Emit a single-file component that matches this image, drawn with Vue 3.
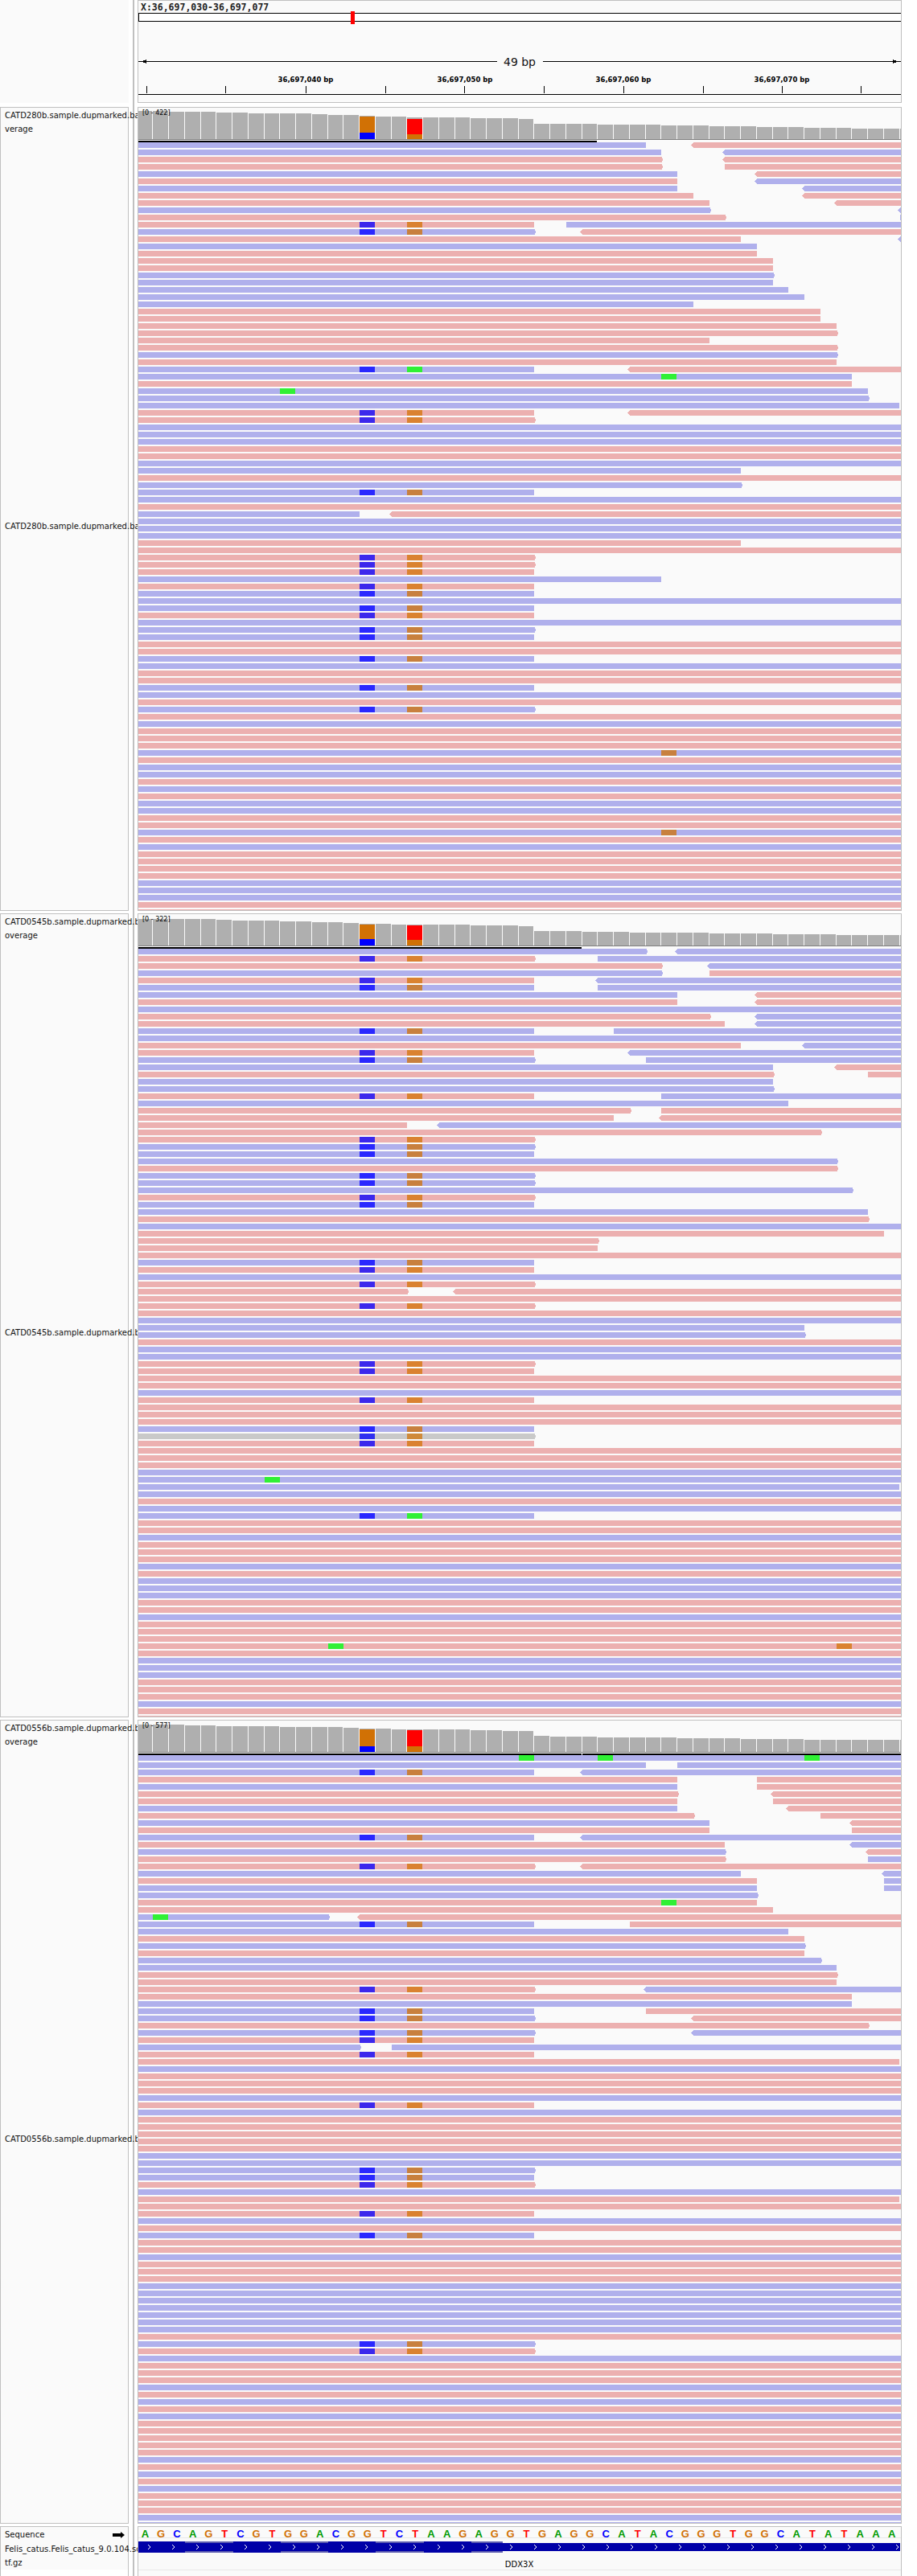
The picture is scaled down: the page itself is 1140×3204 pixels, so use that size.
<script setup>
const bw = 19.75
const bx = (n) => bw * n - 1.5
const W = 948

const MM_COLORS = {
  p: { b: '#3c28ec', o: '#da8230', g: '#30f035' },
  b: { b: '#2a28ff', o: '#c8803e', g: '#30f035' },
  g: { b: '#3030f0', o: '#cf8a3a', g: '#30f035' }
}
const FILL = { p: '#ecb0b0', b: '#b0b0ec', g: '#c9c9c9' }

function parseRead(token) {
  const [head, ...mm] = token.split(':')
  let h = head
  if (h === 'P') h = 'p0'
  if (h === 'B') h = 'b0'
  let extra = []
  if (/^[pbg]m>?$/.test(h)) {
    extra = ['b14', 'o17']
    h = h[0] + '0-25' + (h.endsWith('>') ? '>' : '')
  }
  const m = h.match(/^([pbg])(<)?([\d.]+)(?:-([\d.]+))?(>)?$/)
  return {
    c: m[1],
    la: !!m[2],
    s: +m[3],
    e: m[4] ? +m[4] : null,
    ra: !!m[5],
    mm: [...extra, ...mm]
  }
}

function buildRows(text, y0) {
  const shapes = []
  const mms = []
  text.trim().split(/\s+/).forEach((row, k) => {
    const y = y0 + 9 * k
    row.split(',').forEach((tok) => {
      const r = parseRead(tok)
      const x0 = r.s === 0 ? 0 : Math.round(bx(r.s))
      const x1 = r.e === null ? W : Math.round(bx(r.e))
      const fill = FILL[r.c]
      if (r.la || r.ra) {
        const pts = [[x0, y], [x1, y]]
        if (r.ra) pts.push([x1 + 1, y + 1], [x1 + 2.5, y + 3.5], [x1 + 1, y + 6])
        pts.push([x1, y + 7], [x0, y + 7])
        if (r.la) pts.push([x0 - 1, y + 6], [x0 - 3, y + 3.5], [x0 - 1, y + 1])
        shapes.push({ points: pts.map((p) => p.join(',')).join(' '), fill })
      } else {
        shapes.push({ x: x0, y, w: x1 - x0, fill })
      }
      r.mm.forEach((t) => {
        const n = +t.slice(1)
        mms.push({ x: Math.round(bx(n)), y, fill: MM_COLORS[r.c][t[0]] })
      })
    })
  })
  return { shapes, mms }
}

function buildBars(tops, base, m14, m17) {
  const bars = []
  for (let n = 0; n < 49; n++) {
    const left = Math.round(bx(n))
    const right = Math.min(Math.round(bx(n + 1)) - 1, W)
    const t = (n < 48 ? tops[n] : tops[47]) - base
    bars.push({ x: left, y: t, w: right - left, h: 39 - t, fill: '#afafaf' })
    if (n === 14) {
      bars.push({ x: left, y: m14[0] - base, w: right - left, h: m14[1] - m14[0], fill: '#d17105' })
      bars.push({ x: left, y: m14[1] - base, w: right - left, h: base + 39 - m14[1], fill: '#0000ff' })
    }
    if (n === 17) {
      bars.push({ x: left, y: m17[0] - base, w: right - left, h: m17[1] - m17[0], fill: '#ff0000' })
      bars.push({ x: left, y: m17[1] - base, w: right - left, h: base + 39 - m17[1], fill: '#d17105' })
    }
  }
  return bars
}

const T1 = `b0-32,p<35 b0-33,b<37 p0-33>,p<37 p0-33>,p37 b0-34,p<39 p0-34,b<39 b0-34,b<42 p0-35,p<42 p0-36,p<44
b0-36>,b<48 p0-37>,b48 pm,b27 bm>,p<28 p0-38,b<48 b0-39 p0-39 p0-40 p0-40 b0-40> b0-40 b0-41 b0-42 b0-35 p0-43 p0-43
p0-44 p0-44> p0-36 p0-44> b0-44> p0-44 b0-25:b14:g17,p<31 b0-45:g33 p0-45 b0-46:g9 b0-46> b0-47.95 pm,p<31 pm> B B B P P B
b0-38 P b0-38> bm B P b0-14,p<16 B B B p0-38 P pm> pm> pm b0-33 pm bm B bm pm B bm> bm P P bm B P P bm B P bm> P B P P P
B:o33 P B B P B P B B P P B:o33 P B P P P P B B B P P`

const T2 = `b0-32>,b<34 pm>,b29 p0-33>,b<36 b0-33>,p36 pm,b<29 bm,b29 b0-34,p<39 p0-34,p<39 B p0-36>,b<39 p0-37,b<39 bm,b30 B
p0-38,b<42 pm,b<31 bm>,b32 b0-40,p<44 p0-40>,p46 b0-40 b0-40> pm,b33 b0-41 p0-31>,p33 p0-30,p<33 p0-17,b<19 p0-43> pm> bm> bm
b0-44> p0-44> bm> bm> b0-45> pm> bm b0-46 p0-46> B p0-47 p0-29> p0-29 P bm pm B pm> p0-17>,p<20 P pm> P B b0-42 b0-42> P B B
pm> pm P P B pm P P P bm gm> pm P P P B B:g8 b0-47.95 B P B b0-25:b14:g17 P P B P P P B P B B B P P B P P P P:g12:o44 P B B B
P P P B P P`

const T3 = `B:g24:g29:g42 b0-32,b34 bm,b<28 p0-34,p39 b0-34,p39 p0-34>,p<40 p0-34,p40 b0-34,p<41 p0-35>,p43 b0-36,p<45 p0-36,p45 bm,b<28
p0-37,b<45 b0-37>,p<46 p0-37>,b46 pm>,p<28 b0-38,b<47 p0-39,b47 b0-39,b47 b0-39> p0-39:g33 p0-40 b0-12>:g1,p<14 bm,p31 b0-41
p0-42 b0-42> p0-42 b0-43> b0-44 p0-44> p0-44 pm>,b<32 p0-45 b0-45 bm,p32 bm>,p<35 p0-46> bm>,b<35 pm b0-14>,b16 pm p0-47.95 B P P
P B pm B P P P P P B B bm> bm pm> B p0-47.95 P pm B P bm P P B P P P B B B B B B B P bm> pm> B P P P B P B P B P P P P P B P B P B
P P P B B`

const seqText = 'AGCAGTCGTGGACGGTCTAAGAGGTGAGGCATACGGGTGGCATATAAA'
const seqColor = { A: '#009a00', C: '#0000ff', G: '#d17105', T: '#ff0000' }
const letters = seqText.split('').map((ch, i) => ({ ch, x: bx(i) + bw / 2, fill: seqColor[ch] }))

const tracks = [
  {
    name: 'CATD280b.sample.dupmarked.bam',
    second: 'verage',
    range: '[0 - 422]',
    barEnd: 570,
    gaps: [],
    bars: buildBars(
      [138,138,139,139,139,140,140,141,141,141,141,142,143,143,144,145,145,146,146,146,146,147,147,147,148,154,154,154,154,155,155,155,155,156,156,156,157,157,157,158,158,158,159,159,159,160,160,160],
      134, [145, 165], [148, 167]
    ),
    ...buildRows(T1, 43)
  },
  {
    name: 'CATD0545b.sample.dupmarked.bam',
    second: 'overage',
    range: '[0 - 322]',
    barEnd: 551,
    gaps: [],
    bars: buildBars(
      [1143,1143,1143,1143,1143,1144,1145,1145,1145,1146,1146,1147,1147,1148,1149,1149,1150,1150,1150,1150,1150,1151,1151,1151,1152,1158,1158,1158,1159,1159,1159,1160,1160,1160,1160,1160,1161,1161,1161,1161,1162,1162,1162,1162,1163,1163,1163,1163],
      1137, [1150, 1168], [1151, 1169]
    ),
    ...buildRows(T2, 43)
  },
  {
    name: 'CATD0556b.sample.dupmarked.bam',
    second: 'overage',
    range: '[0 - 577]',
    barEnd: W,
    gaps: [551],
    bars: buildBars(
      [2145,2145,2145,2146,2146,2147,2147,2147,2147,2148,2148,2148,2148,2149,2150,2150,2151,2151,2151,2151,2151,2152,2152,2153,2153,2159,2160,2160,2160,2161,2161,2161,2161,2161,2162,2162,2162,2162,2163,2163,2163,2163,2164,2164,2164,2164,2164,2164],
      2140, [2151, 2172], [2152, 2172]
    ),
    ...buildRows(T3, 43)
  }
]

const ticks = [9.5, 108, 207.5, 306.5, 404.5, 503.5, 602.5, 701.5, 799.5, 898]
const tickLabels = [
  { x: 208, t: '36,697,040 bp' },
  { x: 406, t: '36,697,050 bp' },
  { x: 603, t: '36,697,060 bp' },
  { x: 800, t: '36,697,070 bp' }
]

const lightStrips = [[58, 60], [177, 59], [295, 60], [414, 39]]
const chevrons = Array.from({ length: 32 }, (_, i) => 13 + i * 30)
</script>

<template>
  <div class="app">
    <section class="row header">
      <div class="name blank"></div>
      <div class="data">
        <svg class="canvas" width="948" height="126">
          <text class="locus" x="3" y="12">X:36,697,030-36,697,077</text>
          <rect x="0" y="15" width="948" height="11" fill="#fff" />
          <rect x="0" y="15" width="948" height="1" fill="#000" />
          <rect x="0" y="25" width="948" height="1" fill="#000" />
          <rect x="0" y="15" width="1" height="11" fill="#000" />
          <rect x="264" y="13" width="5" height="16" fill="#ff0000" />
          <rect x="0" y="75" width="446" height="1" fill="#000" />
          <rect x="503" y="75" width="445" height="1" fill="#000" />
          <polygon points="3,75.5 10,73 10,78" fill="#000" />
          <polygon points="945,75.5 938,73 938,78" fill="#000" />
          <text class="span" x="474" y="81" text-anchor="middle">49 bp</text>
          <text v-for="l in tickLabels" :key="l.t" class="tick" :x="l.x" y="101" text-anchor="middle">{{ l.t }}</text>
          <rect v-for="t in ticks" :key="t" :x="Math.round(t)" y="106" width="1" height="9" fill="#000" />
          <rect x="0" y="116" width="948" height="1" fill="#000" />
        </svg>
      </div>
    </section>

    <section v-for="t in tracks" :key="t.name" class="row track">
      <div class="name">
        <div class="label clip">{{ t.name }}</div>
        <div class="label">{{ t.second }}</div>
        <div class="label clip mid">{{ t.name }}</div>
      </div>
      <div class="data">
        <svg class="canvas" width="948" height="998">
          <rect
            v-for="(b, i) in t.bars"
            :key="'c' + i"
            :x="b.x"
            :y="b.y"
            :width="b.w"
            :height="b.h"
            :fill="b.fill"
          />
          <rect x="0" y="39" width="948" height="1" fill="#808080" />
          <rect x="0" y="41" :width="t.barEnd" height="2" fill="#000" />
          <rect v-for="g in t.gaps" :key="g" :x="g" y="41" width="1" height="2" fill="#fff" />
          <text class="range" x="5" y="9">{{ t.range }}</text>
          <template v-for="(s, i) in t.shapes" :key="'s' + i">
            <polygon v-if="s.points" :points="s.points" :fill="s.fill" />
            <rect v-else :x="s.x" :y="s.y" :width="s.w" height="7" :fill="s.fill" />
          </template>
          <rect
            v-for="(m, i) in t.mms"
            :key="'m' + i"
            :x="m.x"
            :y="m.y"
            width="19"
            height="7"
            :fill="m.fill"
          />
        </svg>
      </div>
    </section>

    <section class="row seq">
      <div class="name">
        <div class="seq-title">
          <span class="label">Sequence</span>
          <svg class="seq-arrow" width="15" height="8" viewBox="0 0 15 8">
            <polygon points="0,2 10,2 10,0 15,4 10,8 10,6 0,6" fill="#000" />
          </svg>
        </div>
        <div class="label clip gtf">Felis_catus.Felis_catus_9.0.104.sorted.g</div>
        <div class="label">tf.gz</div>
      </div>
      <div class="data">
        <svg class="canvas" width="948" height="60">
          <text
            v-for="(l, i) in letters"
            :key="i"
            class="base"
            :x="l.x"
            y="13"
            text-anchor="middle"
            :fill="l.fill"
          >{{ l.ch }}</text>
          <rect x="0" y="13" width="948" height="1" fill="#e8e8e8" />
          <rect x="0" y="18" width="452" height="14" fill="#0000a8" />
          <rect x="452" y="20" width="495" height="10" fill="#0000a8" />
          <template v-for="s in lightStrips" :key="s[0]">
            <rect :x="s[0]" y="18" :width="s[1]" height="2" fill="#5c5cb0" />
            <rect :x="s[0]" y="30" :width="s[1]" height="2" fill="#5c5cb0" />
          </template>
          <polyline
            v-for="c in chevrons"
            :key="c"
            class="chev"
            :points="`${c - 1},22 ${c + 2},25 ${c - 1},28`"
          />
          <text class="gene" x="473.5" y="50" text-anchor="middle">DDX3X</text>
          <rect x="0" y="53" width="948" height="1" fill="#e8e8e8" />
        </svg>
      </div>
    </section>
  </div>
</template>

<style scoped>
.app {
  width: 1140px;
  height: 3204px;
  overflow: hidden;
  background: linear-gradient(#c0c0c0, #c0c0c0) 165px 0 / 2px 100% no-repeat;
  font-family: "DejaVu Sans", sans-serif;
  color: #111;
}
.row {
  display: flex;
  gap: 11px;
}
.header {
  height: 128px;
}
.track {
  height: 1000px;
  margin-top: 3px;
}
.header + .track {
  margin-top: 5px;
}
.seq {
  height: 62px;
  margin-top: 3px;
}
.name {
  position: relative;
  flex: 0 0 160px;
  min-width: 0;
  box-sizing: border-box;
  border: 1px solid #c0c0c0;
  background: #fafafa;
  padding: 1px 0 0 5px;
}
.name.blank {
  border: 0;
}
.seq .name {
  border-bottom: 0;
  background: linear-gradient(#fafafa 0 53px, #fff 53px);
}
.data {
  position: relative;
  z-index: 1;
  flex: 0 0 950px;
  min-width: 0;
  box-sizing: border-box;
  border: 1px solid #c0c0c0;
  background: #fafafa;
  overflow: hidden;
}
.seq .data {
  border-bottom: 0;
}
.canvas {
  display: block;
  shape-rendering: crispEdges;
}
.label {
  font-size: 10px;
  line-height: 17px;
  white-space: nowrap;
  position: relative;
}
.clip {
  width: 165px;
  overflow: hidden;
}
.mid {
  margin-top: 477px;
}
.locus {
  font-size: 11.5px;
  font-family: "DejaVu Sans Mono", monospace;
  font-weight: 700;
  fill: #222;
}
.span {
  font-size: 14px;
  fill: #111;
}
.tick {
  font-size: 8.5px;
  font-weight: 700;
  fill: #000;
}
.range {
  font-size: 8px;
  fill: #000;
}
.base {
  font-family: "Liberation Sans", sans-serif;
  font-weight: 700;
  font-size: 13px;
}
.chev {
  fill: none;
  stroke: #fff;
  stroke-width: 1;
}
.gene {
  font-size: 10px;
  fill: #000;
}
.seq-title {
  display: flex;
  justify-content: space-between;
  align-items: center;
  padding-right: 4px;
  height: 17px;
}
.seq-arrow {
  display: block;
}
.gtf {
  margin-top: 1px;
}
</style>
<style>
html, body {
  background: #fff;
}
</style>
